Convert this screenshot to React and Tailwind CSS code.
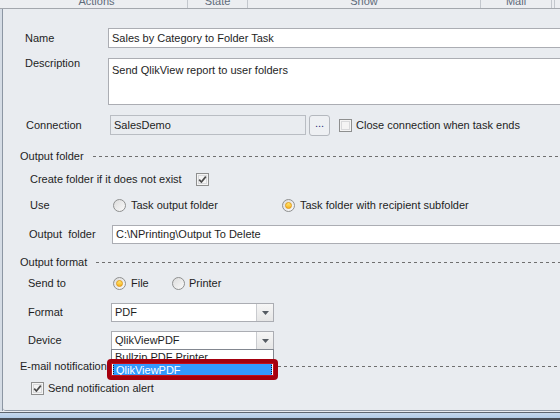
import { useState } from "react";

function CheckBox({ checked }) {
  return (
    <span className="flex h-[13px] w-[13px] shrink-0 items-center justify-center border border-[#8e8f8f] bg-[#f4f4f4] shadow-[inset_0_0_0_1px_#f4f4f4,inset_0_0_0_2px_#d8d9db]">
      {checked && (
        <svg viewBox="0 0 11 11" className="h-[11px] w-[11px]" aria-hidden="true">
          <path
            d="M2.2 5.6 L4.4 8 L8.8 2.6"
            fill="none"
            stroke="#4b4b4b"
            strokeWidth="1.7"
          />
        </svg>
      )}
    </span>
  );
}

function Radio({ checked }) {
  return (
    <span className="flex h-[13px] w-[13px] shrink-0 items-center justify-center rounded-full border border-[#8e8f8f] bg-gradient-to-br from-[#dcdcdc] to-[#fafafa]">
      {checked && (
        <span className="h-[7px] w-[7px] rounded-full border border-[#e19a1a] bg-gradient-to-b from-[#ffe86a] to-[#f7b41c]" />
      )}
    </span>
  );
}

function SectionHeading({ text }) {
  return (
    <div className="flex h-[14px] items-center pl-[17px]">
      <span>{text}</span>
      <span className="ml-[9px] h-px flex-1 bg-[image:repeating-linear-gradient(90deg,#6f6f6f_0_3px,transparent_3px_6px)]" />
    </div>
  );
}

function Select({ value }) {
  return (
    <div className="flex h-[19px] w-[163px] border border-[#abadb3] bg-white">
      <span className="flex flex-1 items-center pl-[3px] leading-none">{value}</span>
      <span className="flex w-[17px] items-center justify-center border-l border-[#c9cbcf] bg-gradient-to-b from-[#f6f6f6] to-[#e6e6e6]">
        <svg viewBox="0 0 7 4" className="h-[4px] w-[7px]" aria-hidden="true">
          <path d="M0 0 H7 L3.5 4 Z" fill="#555b62" />
        </svg>
      </span>
    </div>
  );
}

export default function App() {
  const [name] = useState("Sales by Category to Folder Task");

  return (
    <div className="relative flex h-[420px] w-[560px] flex-col overflow-hidden bg-[#e9ecf0] font-['Liberation_Sans',Arial,sans-serif] text-[11px] text-[#1e1e1e]">
      {/* column headers of the task grid, scrolled up */}
      <div className="flex h-[9px] shrink-0 overflow-hidden border-b border-[#a3a7ad] bg-[#eceef1] text-[#5f6b7a]">
        <div className="flex w-[188px] justify-center border-r border-[#c3c7cd]">
          <span className="-mt-[7px] pl-[6px]">Actions</span>
        </div>
        <div className="flex w-[60px] justify-center border-r border-[#c3c7cd]">
          <span className="-mt-[7px]">State</span>
        </div>
        <div className="flex w-[233px] justify-center border-r border-[#c3c7cd]">
          <span className="-mt-[7px]">Show</span>
        </div>
        <div className="flex w-[71px] justify-center border-r border-[#c3c7cd]">
          <span className="-mt-[7px]">Mail</span>
        </div>
        <div className="w-[3px] border-r border-[#c3c7cd]" />
      </div>

      <div className="flex flex-1">
        <div className="w-[3px] shrink-0 border-r border-[#8c96a3] bg-[#d5dce5]" />

        <div className="flex w-[620px] shrink-0 flex-col rounded-bl-[3px] border-b border-[#8c96a3]">
          {/* Name */}
          <div className="mt-[19px] flex h-[20px] items-center">
            <span className="w-[105px] shrink-0 pl-[22px]">Name</span>
            <div className="flex h-[20px] flex-1 items-center border border-[#abadb3] bg-white pl-[3px]">
              {name}
            </div>
          </div>

          {/* Description */}
          <div className="mt-[10px] flex h-[47px] items-start">
            <span className="-mt-[3px] w-[105px] shrink-0 pl-[22px]">Description</span>
            <div className="h-[47px] flex-1 border border-[#abadb3] bg-white pl-[3px] pt-[3px]">
              Send QlikView report to user folders
            </div>
          </div>

          {/* Connection */}
          <div className="mt-[10px] flex h-[20px] items-center">
            <span className="w-[107px] shrink-0 pl-[23px]">Connection</span>
            <div className="flex h-[20px] w-[196px] items-center border border-[#b9bdc3] bg-[#e9ecf0] pl-[3px]">
              SalesDemo
            </div>
            <div className="ml-[3px] flex h-[21px] w-[21px] items-center justify-center rounded-[3px] border border-[#b4b8be] bg-[#eef0f3] pb-[3px] text-[#2b2f7a]">
              ...
            </div>
            <span className="ml-[9px]">
              <CheckBox checked={false} />
            </span>
            <span className="ml-[4px]">Close connection when task ends</span>
          </div>

          {/* Output folder */}
          <div className="mt-[14px]">
            <SectionHeading text="Output  folder" />
          </div>

          <div className="mt-[9px] flex h-[14px] items-center">
            <span className="pl-[27px]">Create folder if it does not exist</span>
            <span className="ml-[14px]">
              <CheckBox checked />
            </span>
          </div>

          <div className="mt-[12px] flex h-[14px] items-center">
            <span className="w-[110px] shrink-0 pl-[27px]">Use</span>
            <Radio checked={false} />
            <span className="ml-[5px] w-[151px] shrink-0">Task output folder</span>
            <Radio checked />
            <span className="ml-[5px]">Task folder with recipient subfolder</span>
          </div>

          <div className="mt-[13px] flex h-[19px] items-center">
            <span className="w-[109px] shrink-0 pl-[26px]">Output&nbsp;&nbsp;folder</span>
            <div className="flex h-[19px] flex-1 items-center border border-[#abadb3] bg-white pl-[3px]">
              C:\NPrinting\Output To Delete
            </div>
          </div>

          {/* Output format */}
          <div className="mt-[11px]">
            <SectionHeading text="Output format" />
          </div>

          <div className="mt-[7px] flex h-[14px] items-center">
            <span className="w-[110px] shrink-0 pl-[25px]">Send to</span>
            <Radio checked />
            <span className="ml-[5px] w-[41px] shrink-0">File</span>
            <Radio checked={false} />
            <span className="ml-[4px]">Printer</span>
          </div>

          <div className="mt-[13px] flex h-[19px] items-center">
            <span className="w-[108px] shrink-0 pl-[25px]">Format</span>
            <Select value="PDF" />
          </div>

          <div className="relative mt-[9px] flex h-[19px] items-center">
            <span className="w-[108px] shrink-0 pl-[25px]">Device</span>
            <Select value="QlikViewPDF" />

            {/* open drop-down list */}
            <div className="absolute left-[108px] top-[18px] z-10 h-[31px] w-[163px] overflow-hidden border border-[#828790] bg-white">
              <div className="flex h-[12px] items-center pl-[3px] pt-[2px]">Bullzip PDF Printer</div>
              <div className="mx-px flex h-[16px] items-center border border-dotted border-[#1a1a1a] bg-[#3399ff] pl-[2px] text-white">
                QlikViewPDF
              </div>
            </div>
            <div className="absolute left-[104px] top-[28px] z-20 h-[21px] w-[171px] rounded-[4px] border-[4px] border-[#a5000e] shadow-[inset_0_0_0_1px_#c4101c]" />
          </div>

          {/* E-mail notification */}
          <div className="mt-[9px]">
            <SectionHeading text="E-mail notification alert" />
          </div>

          <div className="mt-[8px] flex h-[14px] items-center">
            <span className="ml-[28px]">
              <CheckBox checked />
            </span>
            <span className="ml-[4px]">Send notification alert</span>
          </div>

          <div className="flex-1" />
        </div>
      </div>

      {/* window frame at the bottom */}
      <div className="h-px shrink-0 bg-[#e9ecf0]" />
      <div className="h-px shrink-0 bg-[#5d6670]" />
      <div className="h-[5px] shrink-0 bg-gradient-to-b from-[#c6d9ee] to-[#b2cbe6]" />
      <div className="h-[2px] shrink-0 bg-[#454c55]" />
    </div>
  );
}
